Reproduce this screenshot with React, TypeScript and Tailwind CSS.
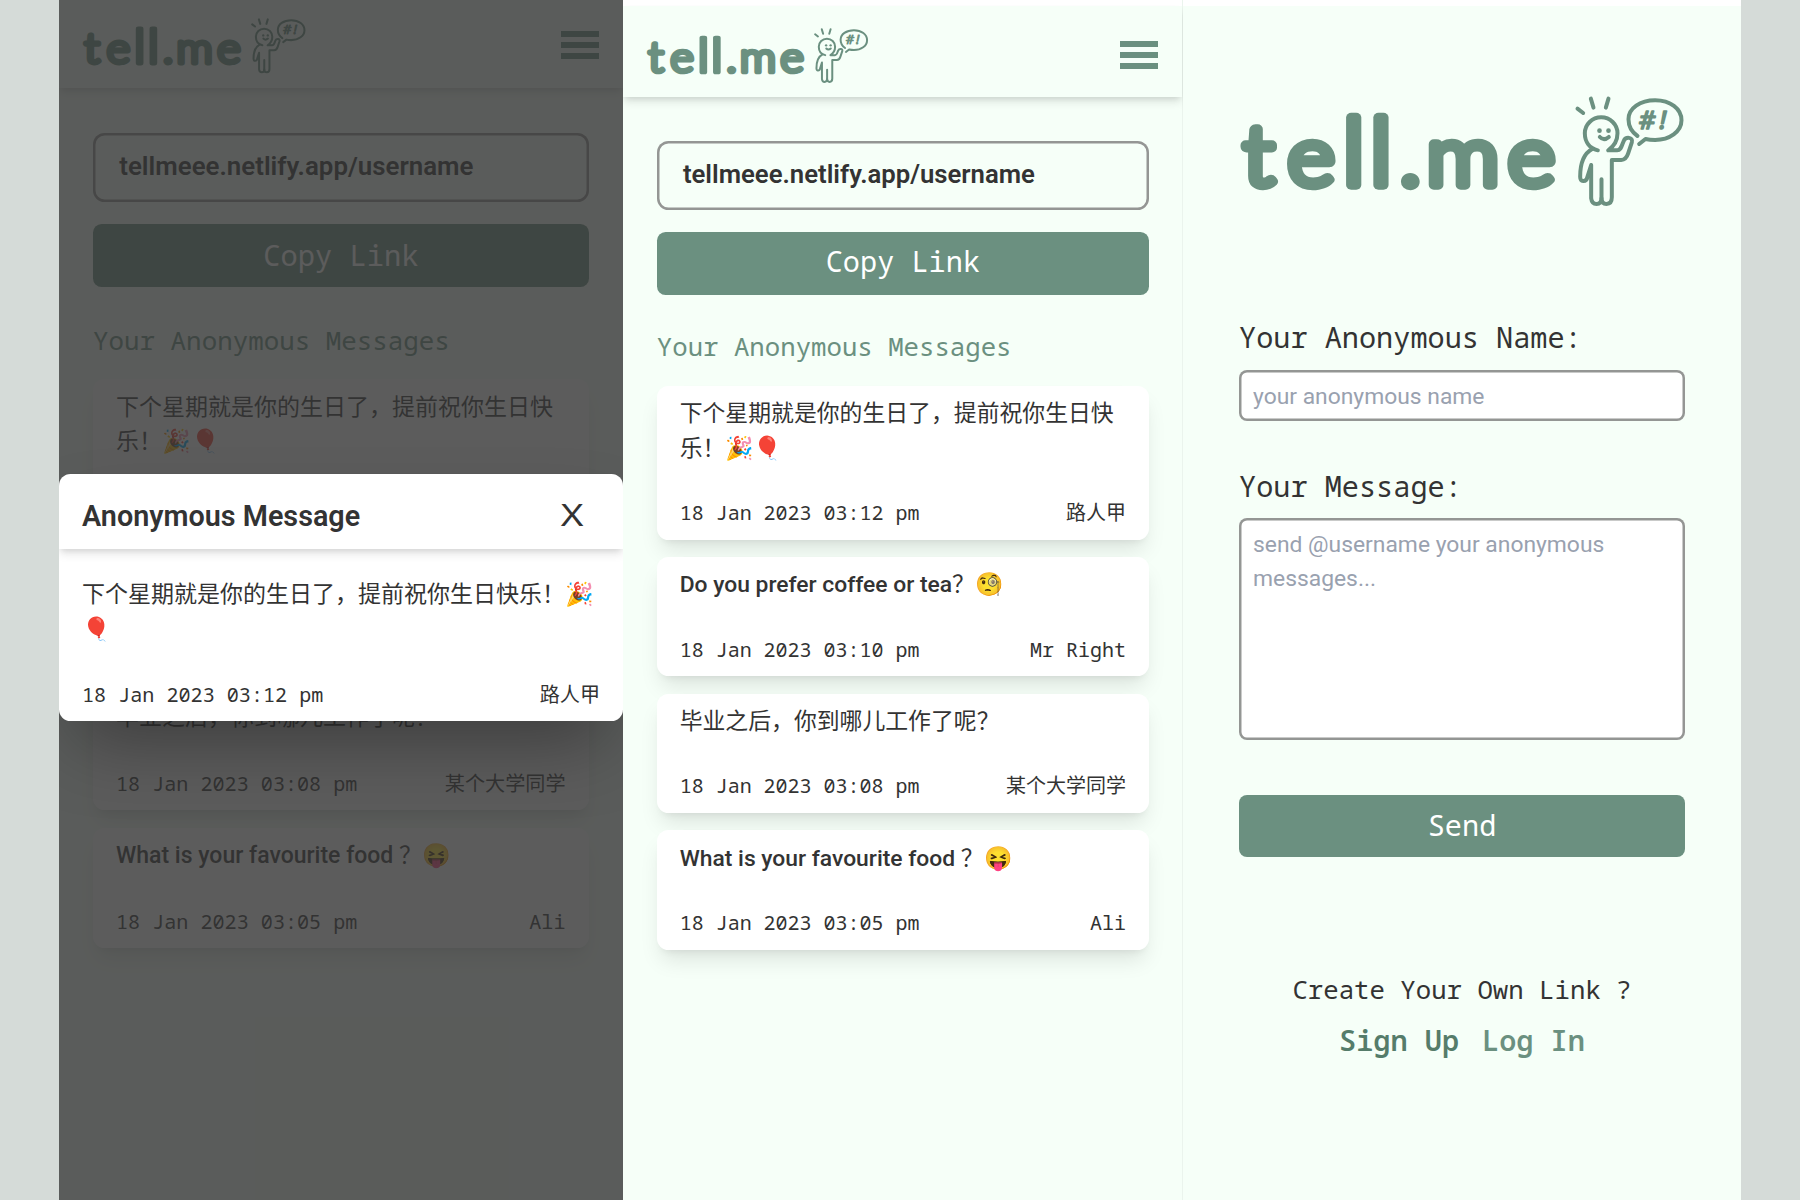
import React from "react";

const sans = "font-[Roboto,'Noto_Sans_CJK_SC',sans-serif]";
const mono = "font-['Noto_Sans_Mono','DejaVu_Sans_Mono','Noto_Sans_CJK_SC',monospace]";

const headerShadow = "shadow-[0_6px_9px_-1px_rgba(0,0,0,0.1),0_3px_6px_-2px_rgba(0,0,0,0.1)]";
const cardShadow = "shadow-[0_14px_21px_-4px_rgba(0,0,0,0.1),0_6px_9px_-6px_rgba(0,0,0,0.1)]";
const outline = "shadow-[inset_0_0_0_2.5px_#949694]";

type Message = { body: React.ReactNode; time: string; from: string };

const messages: Message[] = [
  { body: "下个星期就是你的生日了，提前祝你生日快乐！🎉🎈", time: "18 Jan 2023 03:12 pm", from: "路人甲" },
  {
    body: (
      <>
        <span className="font-medium">Do you prefer coffee or tea</span>？🧐
      </>
    ),
    time: "18 Jan 2023 03:10 pm",
    from: "Mr Right",
  },
  { body: "毕业之后，你到哪儿工作了呢？", time: "18 Jan 2023 03:08 pm", from: "某个大学同学" },
  {
    body: (
      <>
        <span className="font-medium">What is your favourite food</span> ？😝
      </>
    ),
    time: "18 Jan 2023 03:05 pm",
    from: "Ali",
  },
];

function Logo({ className }: { className: string }) {
  return (
    <svg viewBox="0 0 446 112" className={className} fill="none">
      <text
        transform="scale(1.09 1)"
        y="89"
        x="4 44.5 95 120 147.5 172 246.5"
        fontFamily="Lato, sans-serif"
        fontWeight="300"
        fontSize="83"
        fill="#6b9080"
        stroke="#6b9080"
        strokeWidth="9.5"
        strokeLinejoin="round"
      >
        te<tspan fontSize="93">ll</tspan>.me
      </text>
      <g
        transform="translate(310.5 -16) scale(0.3333)"
        stroke="#6b9080"
        strokeWidth="12"
        strokeLinecap="round"
        strokeLinejoin="round"
      >
        <path d="M84 86 101 99M124 56 132 83M177 56 169 83" />
        <path d="M145 211C120 205 106 185 106 160A49 48 0 1 1 204 160C204 182 192 200 176 211H203C212 211 215 203 219 192L223 182C228 170 252 170 247 187L236 220Q230 239 215 240H187V352Q187 372 171 372Q156 372 156 355V298" />
        <path d="M128 207C104 220 92 250 92 290Q92 304 102 303Q112 303 114 290L125 255V355Q127 372 141 372Q156 372 156 355" />
        <path d="M151 171Q163 184 178 171" />
        <path d="M264 168C245 155 237 140 237 118C237 85 272 61 317 61C362 61 396 86 396 121C396 155 360 180 317 180Q300 180 288 177L269 192" />
        <circle cx="150" cy="152" r="7" fill="#6b9080" stroke="none" />
        <circle cx="177" cy="152" r="7" fill="#6b9080" stroke="none" />
        <text
          x="268 330"
          y="146"
          fontFamily="'Noto Sans', sans-serif"
          fontStyle="italic"
          fontSize="76"
          fill="#6b9080"
          strokeWidth="5"
        >
          #!
        </text>
      </g>
    </svg>
  );
}

function MessageMeta({ message }: { message: Message }) {
  return (
    <div className={`mt-[1.43em] mb-[0.05em] flex h-[1.25em] items-center justify-between ${mono}`}>
      <span className="text-[0.875em]">{message.time}</span>
      <span className="text-[0.875em]">{message.from}</span>
    </div>
  );
}

function Inbox({ items, mainClass, listClass }: { items: Message[]; mainClass: string; listClass: string }) {
  return (
    <>
      <header className={`flex h-[4em] items-start justify-between px-[1em] ${headerShadow}`}>
        <Logo className="mt-[0.95em] w-[9.75em]" />
        <button className="mt-[1.53em] mr-[0.06em] flex w-[1.64em] flex-col gap-[0.22em]">
          <span className="h-[0.26em] w-full bg-[#6b9080]" />
          <span className="h-[0.26em] w-full bg-[#6b9080]" />
          <span className="h-[0.26em] w-full bg-[#6b9080]" />
        </button>
      </header>
      <main className={`flex flex-col ${mainClass}`}>
        <div className={`flex h-[3em] items-center rounded-[0.5em] px-[1.14em] pb-[0.06em] ${outline}`}>
          <span className="text-[1.125em] font-semibold">tellmeee.netlify.app/username</span>
        </div>
        <button className="mt-[0.97em] flex h-[2.75em] items-center justify-center rounded-[0.375em] bg-[#6b9080] pb-[0.14em] text-white">
          <span className={`text-[1.25em] ${mono}`}>Copy Link</span>
        </button>
        <h2 className="mt-[1.49em] flex h-[1.75em] items-center pb-[0.1em] text-[#6b9080]">
          <span className={`text-[1.125em] ${mono}`}>Your Anonymous Messages</span>
        </h2>
        <ul className={`mt-[0.76em] flex flex-col ${listClass}`}>
          {items.map((m) => (
            <li key={m.time} className={`rounded-[0.5em] bg-white px-[1em] py-[0.5em] ${cardShadow}`}>
              <p className="leading-[1.5]">{m.body}</p>
              <MessageMeta message={m} />
            </li>
          ))}
        </ul>
      </main>
    </>
  );
}

export default function App() {
  return (
    <div className={`flex h-[1200px] w-[1800px] overflow-hidden bg-[#d5dbd8] pl-[59px] text-[#333] ${sans}`}>
      <section className="relative h-full w-[564px] shrink-0 overflow-hidden bg-[#f6fff8] text-[23px]">
        <div className="-mt-1">
          <Inbox items={messages} mainClass="pt-[1.95em] pr-[1.5em] pl-[1.48em]" listClass="gap-[0.77em]" />
        </div>
        <div className="absolute inset-0 bg-[#333]/80" />
        <div className="absolute inset-x-0 top-[474px] h-[247px] rounded-[0.5em] bg-white shadow-[0_36px_72px_-17px_rgba(0,0,0,0.35)]">
          <div className={`flex h-[75px] items-center justify-between px-[1em] pt-[11px] ${headerShadow}`}>
            <span className="text-[1.25em] font-semibold">Anonymous Message</span>
            <button className="mr-[19px] mb-[5px] scale-x-125 font-['Noto_Sans',sans-serif] text-[31px] leading-none">
              X
            </button>
          </div>
          <div className="px-[1em] pt-[29px]">
            <p className="leading-[1.5]">{messages[0].body}</p>
            <MessageMeta message={messages[0]} />
          </div>
        </div>
      </section>

      <section className="h-full w-[560px] shrink-0 border-r border-[#ebf4ed] bg-[#f6fff8] text-[22.857px]">
        <div className="h-[6px] bg-white" />
        <Inbox items={messages} mainClass="pt-[1.91em] pr-[1.45em] pl-[1.48em]" listClass="gap-[0.75em]" />
      </section>

      <section className="h-full w-[558px] shrink-0 bg-[#f6fff8] text-[22.857px]">
        <div className="h-[6px] bg-white" />
        <form className="flex flex-col px-[56px]">
          <Logo className="mt-[90px] w-[446px]" />
          <label className={`mt-[109px] text-[28.57px] leading-[40px] ${mono}`}>Your Anonymous Name:</label>
          <input
            className={`mt-[13px] h-[51px] rounded-[8px] bg-white px-[14px] pt-[2px] placeholder:text-gray-400 ${outline}`}
            placeholder="your anonymous name"
          />
          <label className={`mt-[45px] text-[28.57px] leading-[40px] ${mono}`}>Your Message:</label>
          <textarea
            className={`mt-[12px] h-[222px] resize-none rounded-[8px] bg-white px-[14px] py-[10px] leading-[34.3px] placeholder:text-gray-400 ${outline}`}
            placeholder="send @username your anonymous messages..."
          />
          <button
            type="button"
            className={`mt-[55px] h-[62px] rounded-[8px] bg-[#6b9080] pb-[2px] text-[28.57px] text-white ${mono}`}
          >
            Send
          </button>
        </form>
        <div className={`mt-[113px] flex flex-col items-center ${mono}`}>
          <p className="text-[25.7px] leading-[40px]">Create Your Own Link ?</p>
          <div className="mt-[10px] flex gap-[23px] text-[28.57px] leading-[40px] font-semibold text-[#6b9080]">
            <a className="text-[#557c6a]">Sign Up</a>
            <a>Log In</a>
          </div>
        </div>
      </section>
    </div>
  );
}
